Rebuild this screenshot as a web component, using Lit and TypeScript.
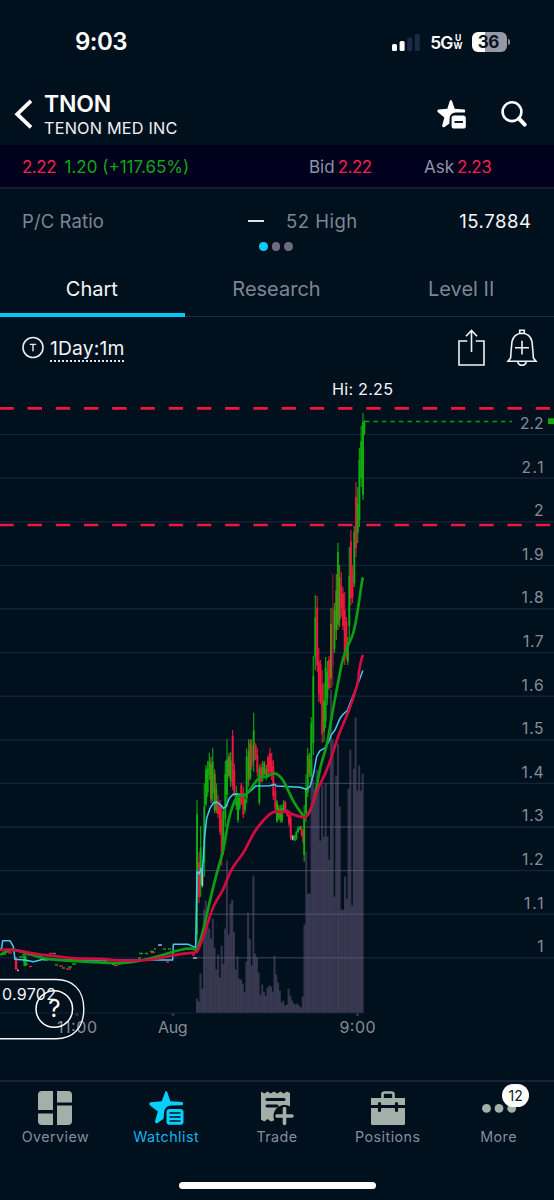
import { LitElement, html, css, svg } from "lit";
import { customElement } from "lit/decorators.js";
import { classMap } from "lit/directives/class-map.js";

type Point = [number, number];

/* Series are stored in thirds of a pixel, relative to the origin of each segment. */
const segment = (ox: number, oy: number, flat: number[]): Point[] => {
  const out: Point[] = [];
  for (let i = 0; i < flat.length; i += 2) out.push([ox + flat[i] / 3, oy + flat[i + 1] / 3]);
  return out;
};

const smooth = (pts: Point[]) => {
  let d = `M${pts[0][0]} ${pts[0][1]}`;
  for (let i = 1; i < pts.length - 1; i++) {
    const mx = (pts[i][0] + pts[i + 1][0]) / 2;
    const my = (pts[i][1] + pts[i + 1][1]) / 2;
    d += `Q${pts[i][0].toFixed(2)} ${pts[i][1].toFixed(2)} ${mx.toFixed(2)} ${my.toFixed(2)}`;
  }
  const last = pts[pts.length - 1];
  return d + `L${last[0].toFixed(2)} ${last[1].toFixed(2)}`;
};

const sharp = (pts: Point[]) => "M" + pts.map((p) => `${p[0].toFixed(2)} ${p[1].toFixed(2)}`).join("L");

const VWAP: Point[] = [
  ...segment(0, 880, [0, 207, 5, 205, 8, 182, 30, 182, 40, 200, 45, 238, 75, 240, 100, 245, 130, 238, 200, 240, 300, 240, 400, 241, 465, 240, 518, 240, 520, 193, 540, 193, 565, 193, 585, 202]),
  ...segment(180, 680, [47, 800, 51, 575, 58, 581, 63, 566, 67, 577, 74, 470, 80, 415, 90, 385, 100, 369, 110, 366, 120, 373, 130, 385, 138, 380, 148, 355, 160, 342, 175, 343, 195, 346, 215, 330, 227, 318, 270, 317, 283, 313, 290, 318, 330, 320, 360, 322, 378, 328]),
  ...segment(290, 680, [60, 320, 70, 285, 80, 230, 90, 212, 103, 205, 115, 188, 125, 163, 135, 150, 150, 115, 160, 102, 172, 92, 180, 70, 200, 20]),
  ...segment(290, 370, [208, 930, 218, 903]),
];

const FAST: Point[] = [
  ...segment(0, 880, [3, 223, 20, 213, 40, 208, 90, 222, 130, 236, 200, 242, 280, 246, 340, 250, 400, 247, 460, 233, 520, 215, 560, 205, 585, 207]),
  ...segment(180, 680, [50, 812, 65, 770, 80, 705, 95, 640, 110, 580, 125, 530, 135, 485, 145, 420, 160, 370, 175, 344, 195, 348, 210, 330, 230, 300, 243, 289, 260, 292, 280, 277, 300, 287, 315, 310, 335, 355, 355, 388, 374, 412]),
  ...segment(290, 680, [48, 412, 65, 385, 75, 350, 85, 290, 95, 245, 110, 200, 122, 130, 132, 70, 146, 0]),
  ...segment(290, 370, [152, 895, 160, 862, 172, 830, 185, 805, 195, 770, 205, 710, 214, 645, 218, 625]),
];

const SLOW: Point[] = [
  ...segment(0, 880, [0, 210, 30, 208, 60, 213, 120, 224, 165, 228, 220, 236, 300, 236, 350, 242, 420, 242, 460, 238, 520, 226, 560, 219, 588, 218]),
  ...segment(180, 680, [53, 812, 65, 785, 80, 740, 95, 690, 110, 660, 130, 630, 150, 575, 170, 545, 190, 520, 205, 490, 225, 452, 250, 420, 275, 397, 290, 394, 305, 397, 320, 393, 340, 405, 374, 413]),
  ...segment(290, 680, [48, 411, 60, 395, 70, 365, 85, 320, 105, 285, 125, 230, 145, 165, 165, 120, 185, 70, 206, 0]),
  ...segment(290, 370, [205, 915, 214, 868, 218, 858]),
];

const VOLUME = [
  14, 11, 39, 24, 103, 112, 86, 84, 74, 94, 65, 43, 58, 35, 67, 49, 84, 152, 78, 109, 113, 81, 43, 56, 34, 33, 29, 21,
  51, 100, 74, 47, 137, 59, 55, 40, 18, 28, 21, 17, 25, 27, 26, 21, 57, 38, 30, 22, 10, 12, 7, 8, 24, 17, 12, 9, 8, 9,
  7, 5, 16, 88, 161, 119, 119, 253, 233, 223, 243, 226, 172, 228, 176, 229, 176, 153, 323, 273, 116, 237, 269, 206,
  103, 103, 136, 114, 224, 263, 107, 244, 295, 222, 247, 222, 239,
];

type Candle = [string, number, number, number];

/* Opening session, thirds of a pixel from (180, 680): colour, x, high, low. */
const MORNING: Candle[] = [
  ["g", 51, 360, 790], ["r", 57, 517, 670], ["g", 62, 438, 650], ["w", 67, 560, 622], ["g", 73, 310, 590], ["g", 78, 255, 380],
  ["g", 83, 243, 350], ["g", 88, 218, 300], ["o", 93, 230, 370], ["g", 98, 205, 365], ["o", 104, 268, 400], ["g", 109, 310, 400],
  ["r", 114, 345, 415], ["r", 120, 360, 465], ["r", 125, 375, 557], ["g", 130, 380, 525], ["g", 136, 243, 440], ["g", 141, 178, 380],
  ["o", 147, 218, 295], ["g", 152, 215, 320], ["r", 158, 150, 330], ["r", 163, 250, 350], ["g", 169, 318, 390], ["g", 174, 340, 428],
  ["g", 179, 340, 390], ["r", 184, 308, 375], ["r", 190, 320, 415], ["g", 195, 340, 400], ["g", 200, 205, 370], ["o", 206, 178, 320],
  ["g", 211, 178, 300], ["r", 215, 178, 270], ["g", 221, 98, 275], ["r", 227, 190, 240], ["r", 232, 205, 290], ["g", 238, 255, 375],
  ["r", 243, 250, 310], ["g", 248, 243, 305], ["o", 253, 243, 285], ["g", 259, 255, 300], ["r", 264, 225, 290], ["r", 270, 203, 285],
  ["r", 275, 218, 300], ["r", 280, 240, 360], ["r", 286, 310, 400], ["g", 291, 360, 428], ["o", 296, 375, 420], ["g", 301, 375, 428],
  ["g", 306, 375, 428], ["g", 311, 360, 400], ["r", 316, 362, 400], ["r", 322, 388, 410], ["r", 327, 390, 440], ["r", 332, 400, 480],
  ["w", 338, 465, 481], ["g", 344, 465, 483], ["g", 349, 452, 480], ["g", 354, 438, 460], ["g", 360, 438, 450], ["r", 365, 438, 470],
  ["r", 370, 450, 490],
];

/* Breakout, page coordinates. */
const BREAKOUT: Candle[] = [
  ["g", 304.2, 805, 861.7], ["g", 306, 774, 822], ["g", 307.7, 748, 797], ["o", 309.5, 753, 777], ["g", 311.3, 717, 780],
  ["g", 313.3, 656, 755], ["g", 315.3, 595, 670], ["r", 317.2, 596, 672], ["r", 318.8, 648, 702], ["r", 320.5, 660, 704],
  ["r", 322.2, 670, 743], ["g", 324, 683, 742], ["g", 325.6, 657, 728], ["g", 327.3, 661, 705], ["r", 329, 656, 690],
  ["o", 331, 608, 688], ["m", 332.8, 574, 686], ["g", 334.5, 603, 653], ["o", 336.3, 574, 640], ["g", 337.9, 543, 630],
  ["o", 339.6, 565, 627], ["r", 341.3, 572, 617], ["r", 343, 587, 630], ["r", 344.7, 592, 665], ["r", 346.4, 617, 660],
  ["g", 347.8, 637, 665], ["g", 349.3, 547, 643], ["r", 350.9, 530, 605], ["r", 352.5, 565, 603], ["g", 354.3, 526, 587],
  ["r", 356, 482, 557], ["g", 357.7, 487, 543], ["g", 359.4, 448, 527], ["g", 361.2, 426, 487], ["g", 363, 413, 500],
  ["g", 364.4, 420, 435],
];

const CANDLES: Candle[] = [
  ...MORNING.map(([c, x, a, b]): Candle => [c, 180 + x / 3, 680 + a / 3, 680 + b / 3]),
  ...BREAKOUT,
];

/* Premarket ticks: colour, x, y, width. */
const TICKS: Candle[] = [
  ["g", 2, 954, 4], ["r", 8, 953, 4], ["r", 15, 965, 2], ["r", 15, 969, 3], ["w", 17, 970.5, 2], ["g", 19, 957, 5], ["g", 23, 961, 5],
  ["g", 25, 964, 3], ["r", 29, 966.5, 3], ["g", 22, 955, 4], ["r", 27, 955, 3], ["g", 38, 956, 4], ["g", 43, 960, 5], ["r", 49, 953.5, 4],
  ["g", 53, 953.5, 3], ["g", 55, 965, 3], ["r", 59, 966, 4], ["g", 62, 968, 3], ["r", 66, 969, 5], ["g", 68, 967, 4], ["g", 72, 964, 4],
  ["g", 104, 961, 4], ["r", 108, 963, 4], ["g", 112, 964.5, 3], ["r", 114, 965.5, 4], ["g", 118, 964, 3], ["g", 124, 961, 4],
  ["r", 130, 961, 3], ["g", 138, 958, 3], ["g", 139, 953.5, 4], ["g", 145, 953.5, 3], ["g", 150, 951.5, 4], ["r", 151, 952.5, 4],
  ["g", 154, 949, 2], ["w", 158, 945, 4], ["g", 163, 949, 3], ["g", 168, 949, 3], ["r", 155, 958, 4], ["r", 166, 962, 3],
  ["r", 192, 955, 3], ["w", 193, 958, 4],
];

const COLORS: Record<string, string> = { g: "#0fae0c", r: "#f0173f", o: "#7c7a1a", m: "#8d1737", w: "#b9bdc6" };
const PRICES = ["2.2", "2.1", "2", "1.9", "1.8", "1.7", "1.6", "1.5", "1.4", "1.3", "1.2", "1.1", "1"];
const LABEL_WIDTHS = [23.5, 22, 9, 21.5, 22, 20.5, 22, 21.5, 22, 21.5, 21.5, 19.5, 5.5];

@customElement("price-chart")
class PriceChart extends LitElement {
  static styles = css`
    :host { display: block; }
    svg { display: block; font-family: Inter, "Liberation Sans", sans-serif; }
    .axis { fill: #858d9b; font-size: 15.6px; }
    .time { fill: #868b96; font-size: 16px; }
    .high { fill: #f3f5f8; font-size: 16.2px; }
    .low { fill: #f3f5f8; font-size: 16px; }
    .help { fill: #fff; font-size: 24px; }
  `;

  render() {
    return html`<svg width="554" height="672" viewBox="0 378 554 672">
      ${PRICES.map((_, i) => svg`<path d=${`M0 ${434.6 + i * 43.6}H554`} stroke="#17233d" stroke-width="1.3" />`)}
      <path d="M0 1013H365" stroke="#182138" stroke-width="1" />
      <path d="M77 1013v3M173 1013v3M357.5 1013v3" stroke="#2b3045" stroke-width="3" />
      ${VOLUME.map((h, i) => svg`<rect x=${195.9 + i * 1.763} y=${1012.6 - h} width="2.1" height=${h} fill="#79698f" fill-opacity=".41" />`)}
      <path d="M196 957.8H364M196 914.2H364M196 870.6H364M300 827H364M300 783.4H364" stroke="#575570" stroke-width="1" stroke-opacity=".6" />
      <path d="M16 957v12" stroke="#f0173f" stroke-width="2.4" />
      <path d="M25 956v10" stroke="#0fae0c" stroke-width="3" />
      ${TICKS.map(([c, x, y, w]) => svg`<rect x=${x} y=${y - 0.7} width=${w} height="1.4" fill=${COLORS[c]} />`)}
      ${CANDLES.map(([c, x, a, b], i) => {
        const inset = (b - a) * (0.1 + ((i * 7) % 5) * 0.05);
        return svg`<path d=${`M${x} ${a}V${b}`} stroke=${COLORS[c]} stroke-width="1.2" stroke-opacity=".9" />
          <path d=${`M${x} ${a + inset}V${b - inset * 0.6}`} stroke=${COLORS[c]} stroke-width="1.9" />`;
      })}
      <g fill="none" stroke-linejoin="round" stroke-linecap="round">
        <path d=${sharp(VWAP)} stroke="#43cdf2" stroke-width="1.5" />
        <path d=${smooth(FAST)} stroke="#0c9e13" stroke-width="2.7" />
        <path d=${smooth(SLOW)} stroke="#d20b42" stroke-width="2.7" />
      </g>
      <path d="M-.7 408.4H551" stroke="#f0173f" stroke-width="2.6" stroke-dasharray="14.4 13.83" />
      <path d="M-.7 525H551" stroke="#f0173f" stroke-width="2.6" stroke-dasharray="14.4 13.83" />
      <path d="M365 421.5H512" stroke="#0c9a0c" stroke-width="1.3" stroke-dasharray="4.4 4.1" />
      <rect x="548" y="418.3" width="6" height="5.8" fill="#0fae0c" />
      ${PRICES.map((p, i) => svg`<text class="axis" x="543.6" y=${429 + i * 43.6} text-anchor="end" textLength=${LABEL_WIDTHS[i]}>${p}</text>`)}
      <text class="high" x="332" y="395.3" textLength="61">Hi: 2.25</text>
      <text class="time" x="57" y="1033.3" textLength="40">11:00</text>
      <text class="time" x="158" y="1033.3" textLength="29.5">Aug</text>
      <text class="time" x="339.5" y="1033.3" textLength="36">9:00</text>
      <path d="M-8 979.5H56C73 979.5 83.8 990 83.8 1009C83.8 1028 73 1038.7 56 1038.7H-8" fill="none" stroke="#f3f5f8" stroke-width="1.4" />
      <text class="low" x="2" y="1000.4" textLength="54">0.9702</text>
      <circle cx="54.3" cy="1009" r="18.3" fill="none" stroke="#fff" stroke-width="1.5" />
      <text class="help" x="54.4" y="1017.3" text-anchor="middle">?</text>
    </svg>`;
  }
}

const WATCH_STAR = "M16.2 .9Q17.2-.8 18.2.9L21.4 10.2 33 11.1Q35 11.8 33.6 14.2L22 14.4Q15.2 15 15 22L14.6 27.8 8.6 31.9Q6 33 6 30.2L8.9 20.6 1 14.4Q-.8 12 1.6 11.2L12.7 10.2Z";

@customElement("app-root")
class AppRoot extends LitElement {
  static styles = css`
    :host { display: block; }
    * { box-sizing: border-box; }
    .screen {
      width: 554px; height: 1200px; overflow: hidden; display: flex; flex-direction: column;
      background: #00101c; color: #fff; font-family: Inter, "Liberation Sans", sans-serif; white-space: nowrap;
    }
    .screen > * { flex: none; }
    svg { display: block; overflow: visible; flex: none; }
    .status { height: 83px; display: flex; align-items: center; padding: 0 44px 0 75px; justify-content: space-between; }
    .clock { font-size: 24px; font-weight: 600; letter-spacing: -0.5px; line-height: 30px; }
    .signals { display: flex; align-items: center; }
    .network { display: flex; align-items: center; margin: 1px 9px 0 10px; font-size: 17.5px; font-weight: 600; letter-spacing: -0.9px; }
    .uw { display: grid; grid-template-rows: 8px 8px; font-size: 8.6px; line-height: 8px; font-weight: 700; margin-left: 1px; text-align: center; letter-spacing: 0; }
    .battery {
      width: 35.5px; height: 20px; border-radius: 6px; background: linear-gradient(90deg, #fff 37%, #9699a3 37%);
      color: #091426; font-size: 17px; line-height: 20.5px; font-weight: 700; text-align: center; letter-spacing: -0.5px; padding-right: 2px;
    }
    .cap { width: 2px; height: 6px; background: #888b96; border-radius: 0 3px 3px 0; margin-left: 1px; }
    .header { height: 62px; display: flex; align-items: center; padding: 0 27px 0 14px; }
    .names { margin-left: 11px; margin-top: 2px; flex: 1; }
    .symbol { font-size: 23px; line-height: 25px; font-weight: 600; letter-spacing: -0.2px; }
    .company { font-size: 16.3px; line-height: 22px; color: #eef0f4; letter-spacing: 0.18px; }
    .find { margin-left: 35px; }
    .quote {
      height: 44px; background: #00001c; border-bottom: 2px solid #171b38; display: grid;
      grid-template-columns: 287px 115px 1fr; align-items: center; padding: 1px 0 0 22px; font-size: 17px;
    }
    .quote div { display: flex; }
    .down { color: #f0224f; letter-spacing: -0.5px; }
    .up { color: #10a818; margin-left: 8.5px; }
    .label { color: #8e95a6; margin-right: 3px; }
    .stats { height: 50px; margin-top: 7px; display: grid; grid-template-columns: 226px 38px 1fr auto; align-items: center; padding: 0 23px 0 22px; font-size: 18.5px; color: #7d8695; letter-spacing: 0.1px; }
    .high { letter-spacing: 0.5px; }
    .dash { width: 16px; height: 2px; background: #dfe3e8; }
    .value { color: #f5f7f9; letter-spacing: 0.55px; margin-right: -0.5px; }
    .dots { display: flex; gap: 4.2px; justify-content: center; height: 14px; margin-top: -4px; padding-right: 2px; }
    .dot { width: 8.6px; height: 8.6px; border-radius: 50%; background: #6e6a80; }
    .dot.on { background: #0cc9fb; }
    .tabs { height: 61px; display: grid; grid-template-columns: repeat(3, 1fr); border-bottom: 1px solid #1d2d3b; }
    .tab { display: flex; align-items: center; justify-content: center; padding: 9px 1px 0 0; font-size: 20px; color: #7d8695; height: 61px; border-bottom: 4px solid transparent; }
    .tab.on { color: #f2f5f8; border-bottom-color: #05c4f7; }
    .tools { height: 61px; display: flex; align-items: center; padding: 0 17px 0 22px; }
    .period { margin: 0 auto 0 6px; border-bottom: 2px dotted #dfe5ea; font-size: 19.3px; line-height: 24px; letter-spacing: 0.15px; color: #f2f5f8; margin-top: 2px; }
    .bell { margin-left: 22px; }
    .nav { height: 120px; margin-top: 30px; border-top: 2px solid #17213a; display: grid; grid-template-columns: repeat(5, 1fr); padding: 9px 0 0; }
    .item { display: grid; grid-template-rows: 35px 22px; align-content: start; justify-items: center; position: relative; color: #848da1; font-size: 14.3px; letter-spacing: 0.45px; line-height: 22px; }
    .item.on { color: #16b5ef; }
    .badge {
      position: absolute; left: 59px; top: -7px; width: 27px; height: 23px; border-radius: 12px; background: #fff;
      color: #101823; font-size: 14px; line-height: 23px; text-align: center; letter-spacing: 0;
    }
    .home { position: absolute; left: 179px; top: 1182px; width: 197px; height: 7px; border-radius: 4px; background: #fff; }
  `;

  private navIcon(name: string) {
    switch (name) {
      case "Overview":
        return svg`<g fill="#a3b0aa"><path d="M4 0H15V19H0V4Q0 0 4 0ZM19 0H30Q34 0 34 4V11.5H19ZM0 22.5H15V34H4Q0 34 0 30ZM19 14.5H34V30Q34 34 30 34H19Z"/></g>`;
      case "Watchlist":
        return svg`<path d=${WATCH_STAR} fill="#05d0ff"/><rect x="17.5" y="18" width="17" height="15.8" rx="3.4" fill="#05d0ff"/>
          <path d="M20.5 22H31.5M20.5 26H31.5M20.5 30H31.5" stroke="#00101c" stroke-width="1.4"/>`;
      case "Trade":
        return svg`<path d="M1 .5 4.3 2.5 7.5 .5 10.7 2.5 14 .5 17.2 2.5 20.5 .5 23.7 2.5 27 .5 30 2V17H26V14H22V18L15 20.5V29L11 30.5 7.5 28 4.3 30.5 1 28.5Z" fill="#a3b0aa"/>
          <path d="M7 15H17" stroke="#00101c" stroke-width="3" stroke-linecap="round"/>
          <circle cx="24.5" cy="25" r="11" fill="#00101c"/><path d="M24.5 17.5V32.5M17 25H32" stroke="#a3b0aa" stroke-width="3.6" stroke-linecap="round"/>
          <path d="M21 4H30V14.6Q24 12.5 21 14.6Z" fill="#a3b0aa"/><path d="M7 8.5H24" stroke="#00101c" stroke-width="3" stroke-linecap="round"/>`;
      case "Positions":
        return svg`<path d="M11.5 8V3.5Q11.5 1.5 13.5 1.5H20.5Q22.5 1.5 22.5 3.5V8" fill="none" stroke="#a3b0aa" stroke-width="2.6"/>
          <path d="M0 7H34V14H0ZM0 17H34V32.5Q34 34 32.5 34H1.5Q0 34 0 32.5Z" fill="#a3b0aa"/>
          <path d="M8.5 12.5V19.5M25.5 12.5V19.5" stroke="#00101c" stroke-width="3.2" stroke-linecap="round"/>`;
      default:
        return svg`<g fill="#a3b0aa"><circle cx="4.5" cy="17.4" r="4.4"/><circle cx="17" cy="17.4" r="4.4"/><circle cx="29.7" cy="17.4" r="4.4"/></g>`;
    }
  }

  render() {
    return html`<main class="screen">
      <div class="status">
        <span class="clock">9:03</span>
        <div class="signals">
          <svg width="28" height="18"><rect x="0" y="11" width="5" height="7" rx="1.5" fill="#fff"/><rect x="7.6" y="8" width="5" height="10" rx="1.5" fill="#fff"/><rect x="15.2" y="4.5" width="5" height="13.5" rx="1.5" fill="#1b2a47"/><rect x="22.8" y="1" width="5" height="17" rx="1.5" fill="#1b2a47"/></svg>
          <span class="network">5G<span class="uw"><span>U</span><span>W</span></span></span>
          <span class="battery">36</span><span class="cap"></span>
        </div>
      </div>
      <header class="header">
        <svg width="19" height="30"><path d="M17 1.8 3.2 15.2 17 28.3" fill="none" stroke="#fff" stroke-width="3.8"/></svg>
        <div class="names"><div class="symbol">TNON</div><div class="company">TENON MED INC</div></div>
        <svg width="29" height="29" viewBox="0 0 29 29"><path fill="#fff" d="M12.8 1Q13.9-.8 15 1L17.7 8.7 27.5 9.5Q29 10.2 27.8 12.4L18.8 12.6Q12.8 13.2 12.6 18.5L12.4 23.4 7.6 26.9Q5 28 5.2 25.2L7.4 17.4 .9 12.3Q-.6 10.2 1.5 9.5L10.3 8.7Z"/><rect x="14.6" y="15.4" width="14.2" height="13.2" rx="2.6" fill="#fff"/><path d="M17.5 22H26" stroke="#00101c" stroke-width="1.9"/></svg>
        <svg class="find" width="26" height="26"><circle cx="11" cy="10.7" r="9.4" fill="none" stroke="#fff" stroke-width="2.6"/><path d="M18 17.7 23.7 23.6" stroke="#fff" stroke-width="4" stroke-linecap="round"/></svg>
      </header>
      <section class="quote">
        <div><span class="down">2.22</span><span class="up">1.20 (+117.65%)</span></div>
        <div><span class="label">Bid</span><span class="down">2.22</span></div>
        <div><span class="label">Ask</span><span class="down">2.23</span></div>
      </section>
      <section class="stats"><span>P/C Ratio</span><span class="dash"></span><span class="high">52 High</span><span class="value">15.7884</span></section>
      <div class="dots"><span class="dot on"></span><span class="dot"></span><span class="dot"></span></div>
      <nav class="tabs">
        ${["Chart", "Research", "Level II"].map((t, i) => html`<span class=${classMap({ tab: true, on: i === 0 })}>${t}</span>`)}
      </nav>
      <div class="tools">
        <svg width="22" height="22"><circle cx="11" cy="10.5" r="10" fill="none" stroke="#e8ecf0" stroke-width="1.6"/><path d="M7.8 7.4H14.2M11 7.4V14.3" stroke="#e8ecf0" stroke-width="1.4" fill="none"/></svg>
        <span class="period">1Day:1m</span>
        <svg width="27" height="37"><path d="M9.3 12H1V36H26V12H17.7M13.5 23V1.5M8 7.2 13.5 1.4 19 7.2" fill="none" stroke="#eef3f6" stroke-width="1.6"/></svg>
        <svg class="bell" width="30" height="37"><path d="M12.7 4V1.3H17.3V4M1 32.3H29L26.4 29Q26 22 25 12.5Q23 4.4 15 4.2Q7 4.4 5 12.5Q4 22 3.6 29ZM10.7 32.5Q11.5 36.3 15 36.3Q18.5 36.3 19.3 32.5M8 18.7H22M15 11.8V25.6" fill="none" stroke="#eef3f6" stroke-width="1.6"/></svg>
      </div>
      <price-chart></price-chart>
      <nav class="nav">
        ${["Overview", "Watchlist", "Trade", "Positions", "More"].map(
          (n) => html`<div class=${classMap({ item: true, on: n === "Watchlist" })}>
            <svg width="34" height="34">${this.navIcon(n)}</svg><span>${n}</span>
            ${n === "More" ? html`<span class="badge">12</span>` : ""}
          </div>`
        )}
      </nav>
      <div class="home"></div>
    </main>`;
  }
}
